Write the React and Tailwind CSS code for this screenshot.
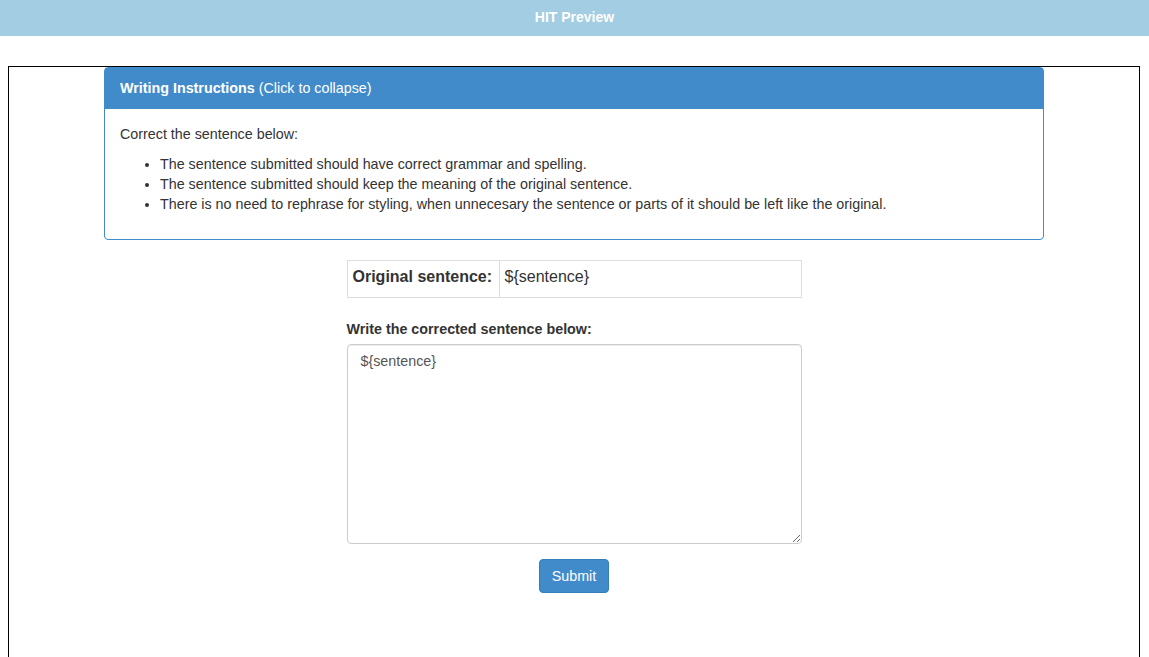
import React from 'react';

const rules = [
  'The sentence submitted should have correct grammar and spelling.',
  'The sentence submitted should keep the meaning of the original sentence.',
  'There is no need to rephrase for styling, when unnecesary the sentence or parts of it should be left like the original.',
];

export default function App() {
  return (
    <div className="h-[657px] overflow-hidden bg-white font-['Liberation_Sans',Arial,sans-serif] text-[14.3px] text-[#333]">
      <div className="flex h-[36px] items-center justify-center bg-[#a2cde2] pb-[2px] text-[14px] font-bold text-white">
        HIT Preview
      </div>

      <div className="ml-[8px] mt-[30px] h-[591px] w-[1132px] border-x border-t border-black">
        <div className="mx-auto w-[940px]">
          <div className="mb-[20px] rounded-[4px] border border-[#428bca]">
            <div className="h-[41px] bg-[#428bca] px-[15px] py-[10px] leading-[20px] text-white">
              <span className="font-bold">Writing Instructions</span> (Click to collapse)
            </div>
            <div className="p-[15px] leading-[20px]">
              <p>Correct the sentence below:</p>
              <ul className="my-[10px] list-disc pl-[40px]">
                {rules.map((r) => (
                  <li key={r}>{r}</li>
                ))}
              </ul>
            </div>
          </div>

          <div className="mx-auto w-[455px]">
            <table className="w-full border-collapse text-[16px] leading-[26px]">
              <tbody>
                <tr>
                  <th className="w-[152px] border border-[#ddd] px-[5px] pt-[3px] pb-[7px] text-left font-bold">Original sentence:</th>
                  <td className="border border-[#ddd] px-[5px] pt-[3px] pb-[7px]">{'${sentence}'}</td>
                </tr>
              </tbody>
            </table>

            <label className="mt-[21px] mb-[5px] block font-bold leading-[20px]">Write the corrected sentence below:</label>
            <textarea
              className="block h-[200px] w-full rounded-[4px] border border-[#ccc] pl-[13px] pr-[12px] py-[6px] leading-[20px] text-[#555] shadow-[inset_0_1px_1px_rgba(0,0,0,0.075)] outline-none"
              defaultValue={'${sentence}'}
            />

            <div className="mt-[15px] flex justify-center">
              <button className="h-[34px] w-[70px] rounded-[4px] border border-[#357ebd] bg-[#428bca] leading-[20px] text-white">
                Submit
              </button>
            </div>
          </div>
        </div>
      </div>
    </div>
  );
}
